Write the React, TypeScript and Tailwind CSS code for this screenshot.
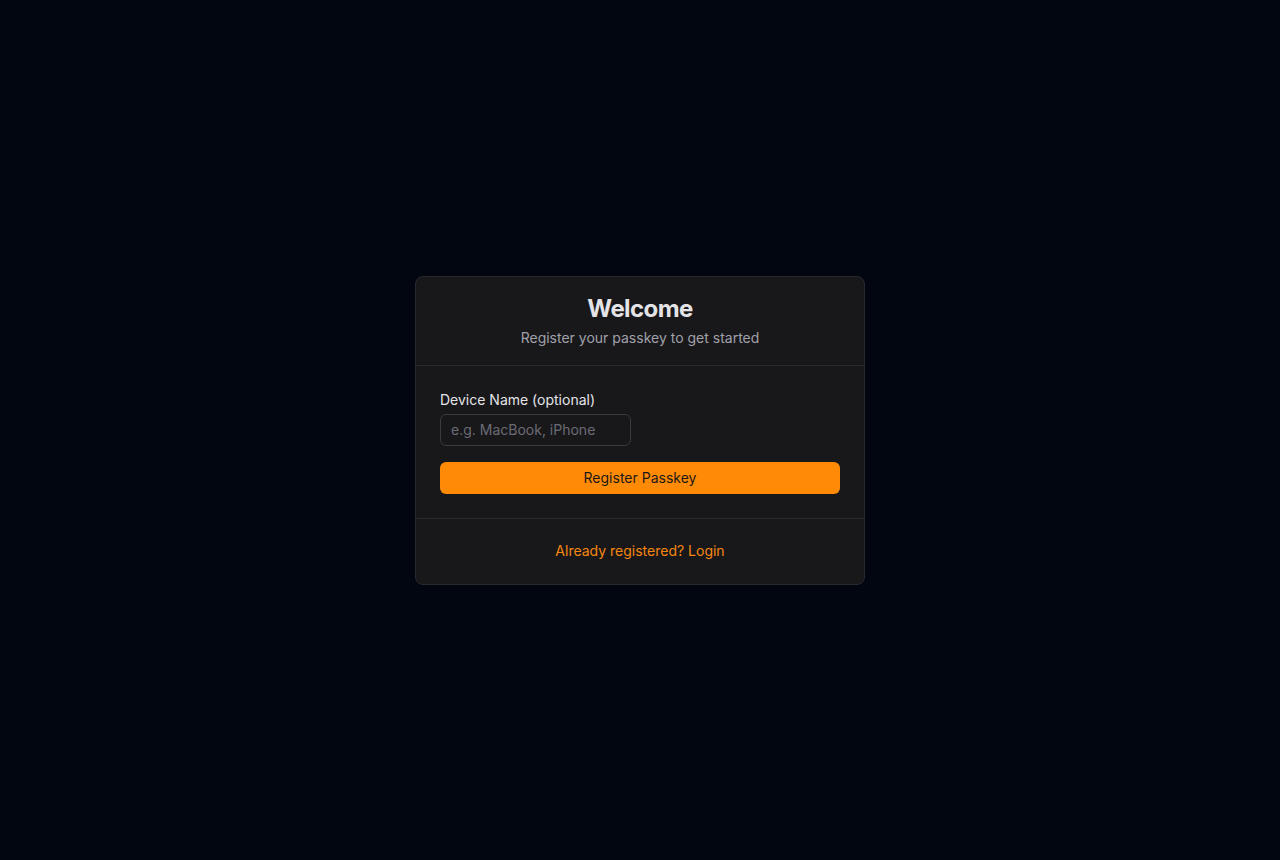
export default function App() {
  return (
    <div
      className="flex min-h-screen items-center justify-center bg-[#020611]"
      style={{ fontFamily: "Inter, 'Noto Sans', sans-serif" }}
    >
      <div className="w-[450px] overflow-hidden rounded-lg border border-[#2a2a2e] bg-[#18181b]">
        <div className="border-b border-[#2a2a2e] px-6 pb-[17px] pt-4 text-center">
          <h1 className="text-2xl font-bold tracking-tight text-[#e4e4e7]">Welcome</h1>
          <p className="mt-[3px] text-sm text-[#a1a1aa]">Register your passkey to get started</p>
        </div>
        <div className="border-b border-[#2a2a2e] p-6">
          <label className="mb-1 block text-sm text-[#e4e4e7]">Device Name (optional)</label>
          <input
            type="text"
            placeholder="e.g. MacBook, iPhone"
            className="h-8 w-[191px] rounded-md border border-[#3a3a40] bg-transparent px-2.5 text-sm text-[#e4e4e7] placeholder:text-[#6b6b73] focus:outline-none"
          />
          <button className="mt-4 flex h-8 w-full items-center justify-center rounded-md bg-[#ff8a05] text-sm text-[#1c1917]">
            Register Passkey
          </button>
        </div>
        <div className="pb-[21px] pt-[19px] text-center">
          <a href="#" className="text-sm leading-6 text-[#f5870f]">
            Already registered? Login
          </a>
        </div>
      </div>
    </div>
  );
}
